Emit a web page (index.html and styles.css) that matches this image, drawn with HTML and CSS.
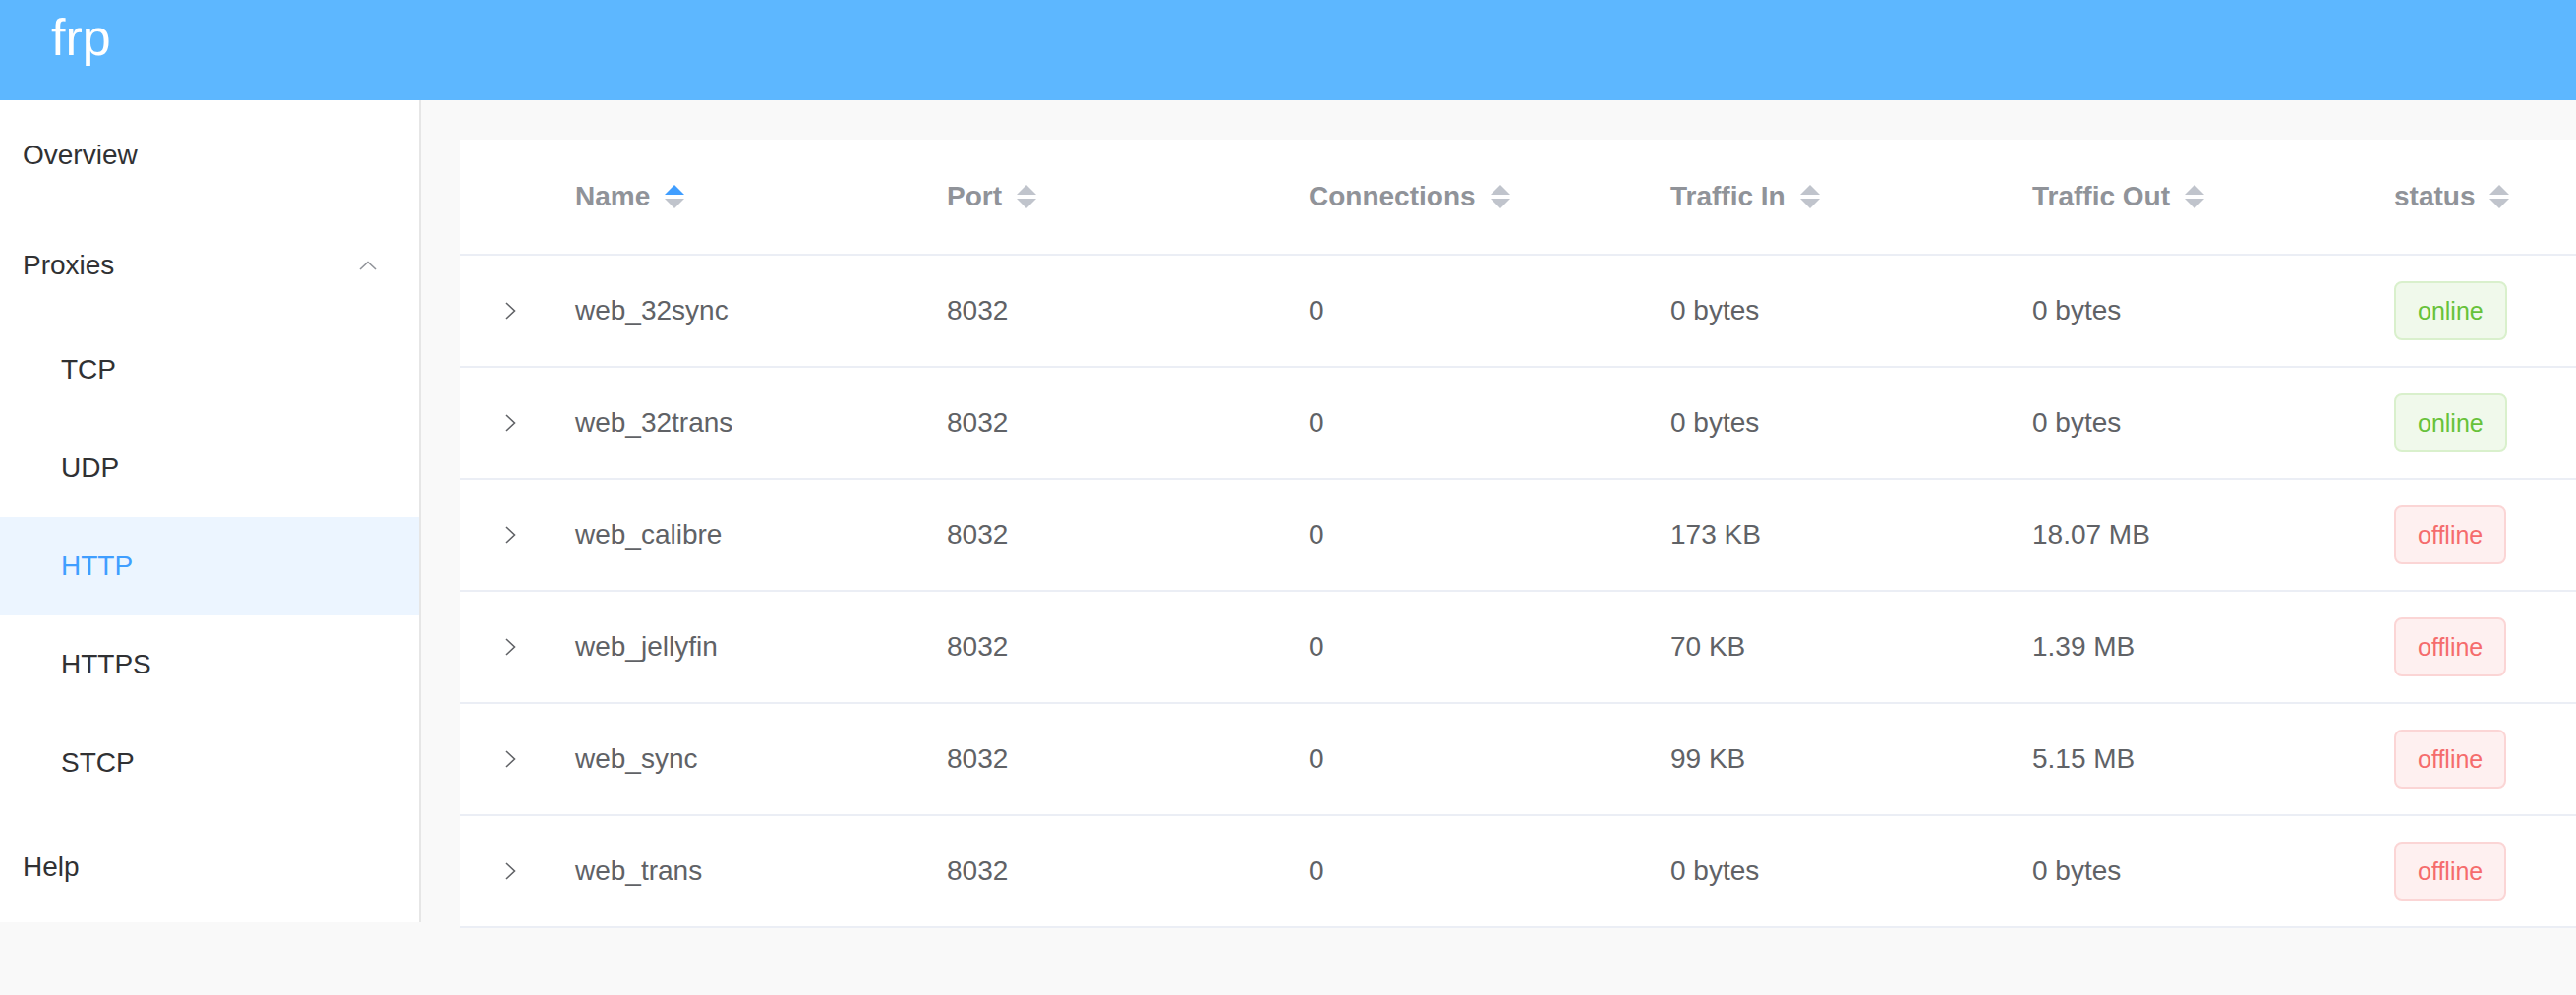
FILE: index.html
```html
<!DOCTYPE html>
<html>
<head>
<meta charset="utf-8">
<title>frp</title>
<link rel="stylesheet" href="styles.css">
</head>
<body>
<header class="topbar"><span class="brand">frp</span></header>
<div class="layout">
  <nav class="sidebar">
    <div class="menu-item">Overview</div>
    <div class="menu-item submenu-title">
      <span>Proxies</span>
      <svg class="arrow-up" width="18" height="10" viewBox="0 0 18 10"><polyline points="1,9 9,1.5 17,9" fill="none" stroke="#909399" stroke-width="1.6"/></svg>
    </div>
    <div class="sub-item">TCP</div>
    <div class="sub-item">UDP</div>
    <div class="sub-item active">HTTP</div>
    <div class="sub-item">HTTPS</div>
    <div class="sub-item">STCP</div>
    <div class="menu-item">Help</div>
  </nav>
  <main class="main">
    <div class="table">
      <div class="row head">
        <div class="cell"></div>
        <div class="cell">Name<svg class="caret" width="20" height="24" viewBox="0 0 20 24"><polygon points="10,0 20,10 0,10" fill="#409eff"/><polygon points="0,14 20,14 10,24" fill="#c0c4cc"/></svg></div>
        <div class="cell">Port<svg class="caret" width="20" height="24" viewBox="0 0 20 24"><polygon points="10,0 20,10 0,10" fill="#c0c4cc"/><polygon points="0,14 20,14 10,24" fill="#c0c4cc"/></svg></div>
        <div class="cell">Connections<svg class="caret" width="20" height="24" viewBox="0 0 20 24"><polygon points="10,0 20,10 0,10" fill="#c0c4cc"/><polygon points="0,14 20,14 10,24" fill="#c0c4cc"/></svg></div>
        <div class="cell">Traffic In<svg class="caret" width="20" height="24" viewBox="0 0 20 24"><polygon points="10,0 20,10 0,10" fill="#c0c4cc"/><polygon points="0,14 20,14 10,24" fill="#c0c4cc"/></svg></div>
        <div class="cell">Traffic Out<svg class="caret" width="20" height="24" viewBox="0 0 20 24"><polygon points="10,0 20,10 0,10" fill="#c0c4cc"/><polygon points="0,14 20,14 10,24" fill="#c0c4cc"/></svg></div>
        <div class="cell">status<svg class="caret" width="20" height="24" viewBox="0 0 20 24"><polygon points="10,0 20,10 0,10" fill="#c0c4cc"/><polygon points="0,14 20,14 10,24" fill="#c0c4cc"/></svg></div>
      </div>

      <div class="row">
        <div class="cell expand"><svg width="11" height="18" viewBox="0 0 11 18"><polyline points="1,1 9.5,9 1,17" fill="none" stroke="#606266" stroke-width="1.6"/></svg></div>
        <div class="cell">web_32sync</div><div class="cell">8032</div><div class="cell">0</div><div class="cell">0 bytes</div><div class="cell">0 bytes</div>
        <div class="cell"><span class="tag online">online</span></div>
      </div>
      <div class="row">
        <div class="cell expand"><svg width="11" height="18" viewBox="0 0 11 18"><polyline points="1,1 9.5,9 1,17" fill="none" stroke="#606266" stroke-width="1.6"/></svg></div>
        <div class="cell">web_32trans</div><div class="cell">8032</div><div class="cell">0</div><div class="cell">0 bytes</div><div class="cell">0 bytes</div>
        <div class="cell"><span class="tag online">online</span></div>
      </div>
      <div class="row">
        <div class="cell expand"><svg width="11" height="18" viewBox="0 0 11 18"><polyline points="1,1 9.5,9 1,17" fill="none" stroke="#606266" stroke-width="1.6"/></svg></div>
        <div class="cell">web_calibre</div><div class="cell">8032</div><div class="cell">0</div><div class="cell">173 KB</div><div class="cell">18.07 MB</div>
        <div class="cell"><span class="tag offline">offline</span></div>
      </div>
      <div class="row">
        <div class="cell expand"><svg width="11" height="18" viewBox="0 0 11 18"><polyline points="1,1 9.5,9 1,17" fill="none" stroke="#606266" stroke-width="1.6"/></svg></div>
        <div class="cell">web_jellyfin</div><div class="cell">8032</div><div class="cell">0</div><div class="cell">70 KB</div><div class="cell">1.39 MB</div>
        <div class="cell"><span class="tag offline">offline</span></div>
      </div>
      <div class="row">
        <div class="cell expand"><svg width="11" height="18" viewBox="0 0 11 18"><polyline points="1,1 9.5,9 1,17" fill="none" stroke="#606266" stroke-width="1.6"/></svg></div>
        <div class="cell">web_sync</div><div class="cell">8032</div><div class="cell">0</div><div class="cell">99 KB</div><div class="cell">5.15 MB</div>
        <div class="cell"><span class="tag offline">offline</span></div>
      </div>
      <div class="row">
        <div class="cell expand"><svg width="11" height="18" viewBox="0 0 11 18"><polyline points="1,1 9.5,9 1,17" fill="none" stroke="#606266" stroke-width="1.6"/></svg></div>
        <div class="cell">web_trans</div><div class="cell">8032</div><div class="cell">0</div><div class="cell">0 bytes</div><div class="cell">0 bytes</div>
        <div class="cell"><span class="tag offline">offline</span></div>
      </div>
    </div>
  </main>
</div>
</body>
</html>
```

FILE: styles.css
```css
* { box-sizing: border-box; }
html, body {
  margin: 0;
  padding: 0;
  background: #f9f9f9;
  font-family: "Liberation Sans", Arial, sans-serif;
  overflow: hidden;
  width: 2620px;
  height: 1012px;
}
.topbar {
  height: 102px;
  background: #5db7ff;
  padding: 12px 0 0 52px;
}
.brand {
  color: #fff;
  font-size: 52px;
  line-height: 52px;
  display: block;
}
.layout {
  display: flex;
  align-items: flex-start;
  width: 2620px;
}
.sidebar {
  flex: 0 0 428px;
  width: 428px;
  background: #fff;
  border-right: 2px solid #e6e6e6;
}
.menu-item {
  height: 112px;
  display: flex;
  align-items: center;
  padding-left: 23px;
  font-size: 28px;
  color: #303133;
}
.submenu-title {
  justify-content: space-between;
  padding-right: 43px;
}
.arrow-up { display: block; }
.sub-item {
  height: 100px;
  display: flex;
  align-items: center;
  padding-left: 62px;
  font-size: 28px;
  color: #303133;
}
.sub-item.active {
  background: #ecf5ff;
  color: #409eff;
}
.main {
  flex: 1 1 auto;
  padding: 40px 0 0 40px;
  min-width: 0;
  overflow: hidden;
}
.table {
  width: 2312px;
  background: #fff;
}
.row {
  display: grid;
  grid-template-columns: 94px 378px repeat(5, 368px);
  height: 114px;
  border-bottom: 2px solid #ebeef5;
  align-items: center;
}
.row.head {
  height: 118px;
}
.cell {
  display: flex;
  align-items: center;
  padding-left: 23px;
  font-size: 28px;
  color: #606266;
  white-space: nowrap;
}
.head .cell {
  font-weight: bold;
  color: #909399;
}
.caret {
  margin-left: 15px;
  display: block;
}
.cell.expand {
  padding-left: 46px;
}
.cell.expand svg { display: block; }
.tag {
  display: inline-flex;
  align-items: center;
  height: 60px;
  padding: 0 22px;
  border: 2px solid;
  border-radius: 8px;
  font-size: 25px;
}
.tag.online {
  background: #f0f9eb;
  border-color: #d9f0cc;
  color: #67c23a;
}
.tag.offline {
  background: #fef0f0;
  border-color: #fbd5d5;
  color: #f56c6c;
}
```
